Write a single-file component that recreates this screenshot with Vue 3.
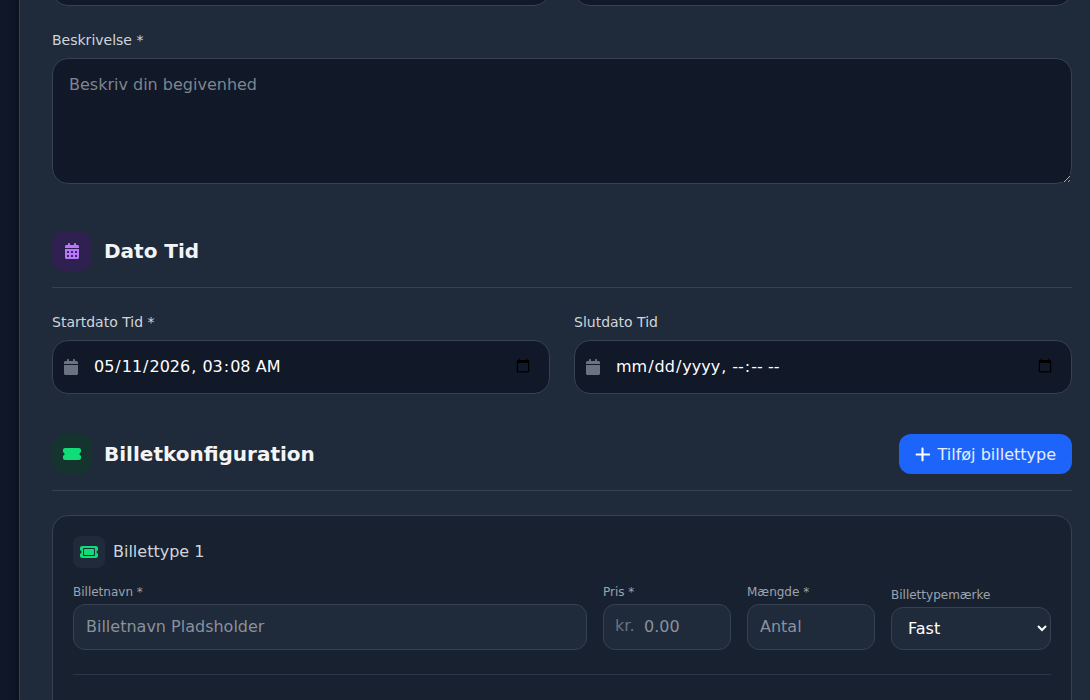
<script setup>
const calendar = 'M96 32V64H48C21.5 64 0 85.5 0 112v48H448V112c0-26.5-21.5-48-48-48H352V32c0-17.7-14.3-32-32-32s-32 14.3-32 32V64H160V32c0-17.7-14.3-32-32-32S96 14.3 96 32zM448 192H0V464c0 26.5 21.5 48 48 48H400c26.5 0 48-21.5 48-48V192z'
const dateFields = [
  { label: 'Startdato Tid *', value: '2026-05-11T03:08' },
  { label: 'Slutdato Tid', value: '' }
]
</script>

<template>
  <div class="page">
    <aside class="rail"></aside>
    <main class="content">
      <div class="top-row">
        <input class="field" type="text" />
        <input class="field" type="text" />
      </div>

      <div class="group">
        <label class="label">Beskrivelse *</label>
        <textarea class="area" rows="4" placeholder="Beskriv din begivenhed"></textarea>
      </div>

      <header class="section-head first">
        <span class="badge purple">
          <svg width="14" height="16" viewBox="0 0 448 512" fill="currentColor"><path d="M128 0c17.7 0 32 14.3 32 32V64H288V32c0-17.7 14.3-32 32-32s32 14.3 32 32V64h48c26.5 0 48 21.5 48 48v48H0V112C0 85.5 21.5 64 48 64H96V32c0-17.7 14.3-32 32-32zM0 192H448V464c0 26.5-21.5 48-48 48H48c-26.5 0-48-21.5-48-48V192zm64 80v32c0 8.8 7.2 16 16 16h32c8.8 0 16-7.2 16-16V272c0-8.8-7.2-16-16-16H80c-8.8 0-16 7.2-16 16zm128 0v32c0 8.8 7.2 16 16 16h32c8.8 0 16-7.2 16-16V272c0-8.8-7.2-16-16-16H208c-8.8 0-16 7.2-16 16zm144-16c-8.8 0-16 7.2-16 16v32c0 8.8 7.2 16 16 16h32c8.8 0 16-7.2 16-16V272c0-8.8-7.2-16-16-16H336zM64 400v32c0 8.8 7.2 16 16 16h32c8.8 0 16-7.2 16-16V400c0-8.8-7.2-16-16-16H80c-8.8 0-16 7.2-16 16zm144-16c-8.8 0-16 7.2-16 16v32c0 8.8 7.2 16 16 16h32c8.8 0 16-7.2 16-16V400c0-8.8-7.2-16-16-16H208zm112 16v32c0 8.8 7.2 16 16 16h32c8.8 0 16-7.2 16-16V400c0-8.8-7.2-16-16-16H336c-8.8 0-16 7.2-16 16z"/></svg>
        </span>
        <h2 class="title">Dato Tid</h2>
      </header>

      <div class="two-col">
        <div v-for="f in dateFields" :key="f.label">
          <label class="label">{{ f.label }}</label>
          <div class="date-wrap">
            <svg class="date-icon" width="14" height="16" viewBox="0 0 448 512" fill="currentColor"><path :d="calendar"/></svg>
            <input class="field date" type="datetime-local" :value="f.value" />
          </div>
        </div>
      </div>

      <header class="section-head second">
        <span class="badge green">
          <svg width="18" height="16" viewBox="0 0 576 512" fill="currentColor"><path d="M0 128C0 92.7 28.7 64 64 64H512c35.3 0 64 28.7 64 64v64c0 8.8-7.4 15.7-15.7 18.6C541.5 217.1 528 235 528 256s13.5 38.9 32.3 45.4c8.3 2.9 15.7 9.8 15.7 18.6v64c0 35.3-28.7 64-64 64H64c-35.3 0-64-28.7-64-64V320c0-8.8 7.4-15.7 15.7-18.6C34.5 294.9 48 277 48 256s-13.5-38.9-32.3-45.4C7.4 207.7 0 200.8 0 192V128z"/></svg>
        </span>
        <h2 class="title">Billetkonfiguration</h2>
        <button class="add" type="button">
          <svg width="15" height="17" viewBox="0 0 448 512" fill="currentColor"><path d="M256 80c0-17.7-14.3-32-32-32s-32 14.3-32 32V224H48c-17.7 0-32 14.3-32 32s14.3 32 32 32H192V432c0 17.7 14.3 32 32 32s32-14.3 32-32V288H432c17.7 0 32-14.3 32-32s-14.3-32-32-32H256V80z"/></svg>
          Tilføj billettype
        </button>
      </header>

      <section class="ticket">
        <div class="ticket-head">
          <span class="mini-badge">
            <svg width="18" height="16" viewBox="0 0 576 512" fill="currentColor"><path d="M64 64C28.7 64 0 92.7 0 128v64c0 8.8 7.4 15.7 15.7 18.6C34.5 217.1 48 235 48 256s-13.5 38.9-32.3 45.4C7.4 304.3 0 311.2 0 320v64c0 35.3 28.7 64 64 64H512c35.3 0 64-28.7 64-64V320c0-8.8-7.4-15.7-15.7-18.6C541.5 294.9 528 277 528 256s13.5-38.9 32.3-45.4c8.3-2.9 15.7-9.8 15.7-18.6V128c0-35.3-28.7-64-64-64H64zm64 112l0 160c0 8.8 7.2 16 16 16H432c8.8 0 16-7.2 16-16V176c0-8.8-7.2-16-16-16H144c-8.8 0-16 7.2-16 16zM96 160c0-17.7 14.3-32 32-32H448c17.7 0 32 14.3 32 32V352c0 17.7-14.3 32-32 32H128c-17.7 0-32-14.3-32-32V160z"/></svg>
          </span>
          <span class="ticket-name">Billettype 1</span>
        </div>
        <div class="ticket-grid">
          <div>
            <label class="small-label">Billetnavn *</label>
            <input class="small-field" type="text" placeholder="Billetnavn Pladsholder" />
          </div>
          <div>
            <label class="small-label">Pris *</label>
            <div class="price-wrap">
              <span class="currency">kr.</span>
              <input class="small-field price" type="text" placeholder="0.00" />
            </div>
          </div>
          <div>
            <label class="small-label">Mængde *</label>
            <input class="small-field" type="text" placeholder="Antal" />
          </div>
          <div>
            <label class="small-label">Billettypemærke</label>
            <select class="small-select">
              <option>Fast</option>
            </select>
          </div>
        </div>
      </section>
    </main>
  </div>
</template>

<style>
html, body { margin: 0; background: #1f2a3a; overflow: hidden; }
</style>

<style scoped>
.page {
  display: flex;
  height: 700px;
  overflow: hidden;
  font-family: "DejaVu Sans", sans-serif;
  background: #1f2a3a;
}
.rail {
  width: 19px;
  flex: none;
  background: linear-gradient(to right, #0f1829 0%, #0e1626 70%, #0a101d 100%);
  border-right: 1px solid #374151;
}
.content {
  flex: 1;
  min-width: 0;
  padding: 0 18px 0 32px;
}
.top-row {
  display: grid;
  grid-template-columns: 1fr 1fr;
  gap: 24px;
  margin-top: -48px;
  margin-bottom: 24px;
}
.label {
  display: block;
  font-size: 14px;
  line-height: 20px;
  margin-bottom: 8px;
  color: #d1d5db;
}
.field {
  box-sizing: border-box;
  width: 100%;
  height: 54px;
  border: 1px solid #374151;
  border-radius: 16px;
  background: #111827;
  color: #fff;
  font: 16px "DejaVu Sans", sans-serif;
  padding: 0 16px 2px;
  outline: none;
}
.area {
  display: block;
  box-sizing: border-box;
  width: 100%;
  height: 126px;
  padding: 14px 16px;
  border: 1px solid #374151;
  border-radius: 16px;
  background: #111827;
  color: #fff;
  font: 16px/24px "DejaVu Sans", sans-serif;
  outline: none;
}
.area::placeholder { color: #7d8590; }
.section-head {
  display: flex;
  align-items: center;
  gap: 12px;
  padding-bottom: 16px;
  border-bottom: 1px solid #374151;
  margin-bottom: 24px;
}
.section-head.first { margin-top: 47px; }
.section-head.second { margin-top: 40px; }
.badge {
  width: 40px;
  height: 40px;
  border-radius: 12px;
  display: flex;
  align-items: center;
  justify-content: center;
  flex: none;
}
.purple { background: #2e2150; color: #bb77fa; }
.green { background: #16342f; color: #10dc78; }
.title {
  margin: 0;
  flex: 1;
  font-size: 20px;
  line-height: 28px;
  font-weight: 700;
  color: #f3f4f6;
}
.two-col {
  display: grid;
  grid-template-columns: 1fr 1fr;
  gap: 24px;
}
.date-wrap { position: relative; }
.date-icon {
  position: absolute;
  left: 12px;
  top: 19px;
  color: #6b7280;
}
.date { padding-left: 40px; }
.add {
  display: flex;
  align-items: center;
  gap: 8px;
  height: 40px;
  padding: 0 16px;
  border: 0;
  border-radius: 12px;
  background: #1d64fb;
  color: #e5edff;
  font: 16px "DejaVu Sans", sans-serif;
}
.add svg { color: #fff; }
.ticket {
  border: 1px solid #374151;
  border-radius: 16px;
  background: #182130;
  padding: 20px;
  height: 400px;
}
.ticket-head {
  display: flex;
  align-items: center;
  gap: 8px;
  margin-bottom: 16px;
}
.mini-badge {
  width: 32px;
  height: 32px;
  border-radius: 8px;
  background: #1f2a3a;
  color: #10dc78;
  display: flex;
  align-items: center;
  justify-content: center;
}
.ticket-name { font-size: 16px; line-height: 20px; color: #d1d5db; }
.ticket-grid {
  display: grid;
  grid-template-columns: 1fr 128px 128px 160px;
  gap: 16px;
  align-items: end;
  padding-bottom: 24px;
  border-bottom: 1px solid #2b3648;
}
.small-label {
  display: block;
  font-size: 12px;
  line-height: 16px;
  margin-bottom: 4px;
  color: #9ca3af;
}
.small-field {
  display: block;
  box-sizing: border-box;
  width: 100%;
  height: 46px;
  padding: 0 12px 2px;
  border: 1px solid #374151;
  border-radius: 12px;
  background: #1f2a3a;
  color: #fff;
  font: 16px "DejaVu Sans", sans-serif;
  outline: none;
}
.small-field::placeholder { color: #8a919c; }
.price-wrap { position: relative; }
.currency {
  position: absolute;
  left: 12px;
  top: 12px;
  font-size: 16px;
  line-height: 20px;
  color: #6b7280;
}
.price { padding-left: 40px; }
.small-select {
  display: block;
  box-sizing: border-box;
  width: 100%;
  height: 43px;
  padding: 0 12px;
  border: 1px solid #374151;
  border-radius: 12px;
  background: #1f2a3a;
  color: #fff;
  font: 16px "DejaVu Sans", sans-serif;
  outline: none;
}
</style>
